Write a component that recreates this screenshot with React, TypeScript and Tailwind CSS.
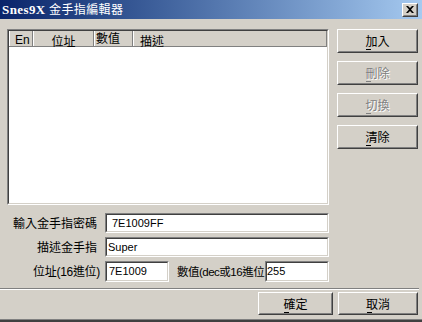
import React from "react";

function Raised({ children, className = "" }: { children: React.ReactNode; className?: string }) {
  return (
    <div className={`border border-t-white border-l-white border-b-[#404040] border-r-[#404040] ${className}`}>
      <div className="w-full h-full border border-t-[#d4d0c8] border-l-[#d4d0c8] border-b-[#808080] border-r-[#808080] flex items-center justify-center">
        {children}
      </div>
    </div>
  );
}

function Sunken({ children, className = "" }: { children?: React.ReactNode; className?: string }) {
  return (
    <div className={`border border-t-[#808080] border-l-[#808080] border-b-white border-r-white ${className}`}>
      <div className="w-full h-full border border-t-[#404040] border-l-[#404040] border-b-[#d4d0c8] border-r-[#d4d0c8] bg-white flex items-center overflow-hidden">
        {children}
      </div>
    </div>
  );
}

function Btn({ first, rest, disabled = false, className = "" }: { first: string; rest: string; disabled?: boolean; className?: string }) {
  return (
    <Raised className={className}>
      <span
        className={`text-[12px] leading-[14px] font-['Noto_Sans_CJK_TC',sans-serif] ${
          disabled ? "text-[#808080] [text-shadow:1px_1px_0_#ffffff]" : "text-black"
        }`}
      >
        <span className="relative">
          {first}
          <span
            className={`absolute left-[1px] bottom-[-1px] w-[5px] h-px ${disabled ? "bg-[#808080]" : "bg-black"}`}
          />
        </span>
        {rest}
      </span>
    </Raised>
  );
}

export default function App() {
  return (
    <div className="w-[422px] h-[322px] bg-[#d4d0c8] flex flex-col overflow-hidden font-['Liberation_Sans','Noto_Sans_CJK_TC',sans-serif] text-[12px] text-black select-none">
      {/* Title bar */}
      <div className="h-[19px] shrink-0 bg-linear-to-r from-[#0a246a] to-[#a6caf0] flex items-center pl-[2px] pr-[4px]">
        <span className="text-white text-[12px] leading-[14px] font-['Liberation_Serif','Noto_Sans_CJK_TC',serif] tracking-[0.4px]">
          <span className="text-[13px] font-bold">Snes9X</span> 金手指編輯器
        </span>
        <div className="ml-auto">
          <Raised className="w-[16px] h-[14px] bg-[#d4d0c8]">
            <svg width="8" height="7" viewBox="0 0 8 7">
              <path d="M0 0h2l2 2 2-2h2L5 3.5 8 7H6L4 5 2 7H0l3-3.5z" fill="#000" />
            </svg>
          </Raised>
        </div>
      </div>

      {/* Main area */}
      <div className="flex pt-[10px] pl-[7px] pr-[4px]">
        <div className="w-[322px] flex flex-col">
          {/* List */}
          <div className="h-[176px] border border-t-[#808080] border-l-[#808080] border-b-white border-r-white">
            <div className="w-full h-full border border-t-[#404040] border-l-[#404040] border-b-[#d4d0c8] border-r-[#d4d0c8] bg-white flex flex-col">
              <div className="h-[16px] flex bg-[#d4d0c8] border-b border-b-[#808080] text-[12px] leading-[14px]">
                <div className="w-[24px] border-l border-l-white border-r border-r-[#808080] pl-[5px] pt-[2px] font-['Liberation_Sans',sans-serif]">En</div>
                <div className="w-[61px] border-l border-l-white border-r border-r-[#808080] flex justify-center pt-[3px] font-['Noto_Sans_CJK_TC',sans-serif]">位址</div>
                <div className="w-[39px] border-l border-l-white border-r border-r-[#808080] pl-[1px] pt-0 font-['Noto_Sans_CJK_TC',sans-serif]">數值</div>
                <div className="flex-1 border-l border-l-white border-r border-r-[#808080] pl-[6px] pt-[3px] font-['Noto_Sans_CJK_TC',sans-serif]">描述</div>
              </div>
            </div>
          </div>

          {/* Form */}
          <div className="mt-[8px] flex flex-col gap-[4px]">
            <div className="flex items-center h-[20px]">
              <div className="w-[90px] text-right font-['Noto_Sans_CJK_TC',sans-serif] leading-[14px]">輸入金手指密碼</div>
              <Sunken className="ml-[8px] w-[224px] h-[20px]">
                <span className="pl-[5px] text-[11px] font-['Liberation_Sans',sans-serif]">7E1009FF</span>
              </Sunken>
            </div>
            <div className="flex items-center h-[20px]">
              <div className="w-[90px] text-right font-['Noto_Sans_CJK_TC',sans-serif] leading-[14px]">描述金手指</div>
              <Sunken className="ml-[8px] w-[224px] h-[20px]">
                <span className="pl-[1px] text-[11px] font-['Liberation_Sans',sans-serif]">Super</span>
              </Sunken>
            </div>
            <div className="flex items-center h-[21px]">
              <div className="w-[93px] text-right whitespace-nowrap leading-[14px] tracking-[-0.3px]">位址(16進位)</div>
              <Sunken className="ml-[5px] w-[64px] h-[21px]">
                <span className="pl-[2px] text-[11px] font-['Liberation_Sans',sans-serif]">7E1009</span>
              </Sunken>
              <div className="ml-[8px] w-[88px] overflow-hidden">
                <div className="whitespace-nowrap leading-[14px] tracking-[-0.5px] text-[11.5px]">數值(dec或16進位</div>
              </div>
              <Sunken className="w-[64px] h-[21px]">
                <span className="text-[11px] font-['Liberation_Sans',sans-serif]">255</span>
              </Sunken>
            </div>
          </div>
        </div>

        {/* Right buttons */}
        <div className="ml-[8px] flex flex-col gap-[8px]">
          <Btn first="加" rest="入" className="w-[81px] h-[24px]" />
          <Btn first="刪" rest="除" disabled className="w-[81px] h-[24px]" />
          <Btn first="切" rest="換" disabled className="w-[81px] h-[24px]" />
          <Btn first="清" rest="除" className="w-[81px] h-[24px]" />
        </div>
      </div>

      {/* Separator */}
      <div className="mt-[6px] mr-[3px] h-[2px] border-t border-t-[#808080] border-b border-b-white" />

      {/* Bottom buttons */}
      <div className="mt-[2px] flex justify-end gap-[5px] pr-[4px]">
        <Btn first="確" rest="定" className="w-[75px] h-[23px]" />
        <Btn first="取" rest="消" className="w-[80px] h-[23px]" />
      </div>

      <div className="flex-1" />
      <div className="h-[3px] border-t border-t-[#808080] bg-[#404040]" />
    </div>
  );
}
